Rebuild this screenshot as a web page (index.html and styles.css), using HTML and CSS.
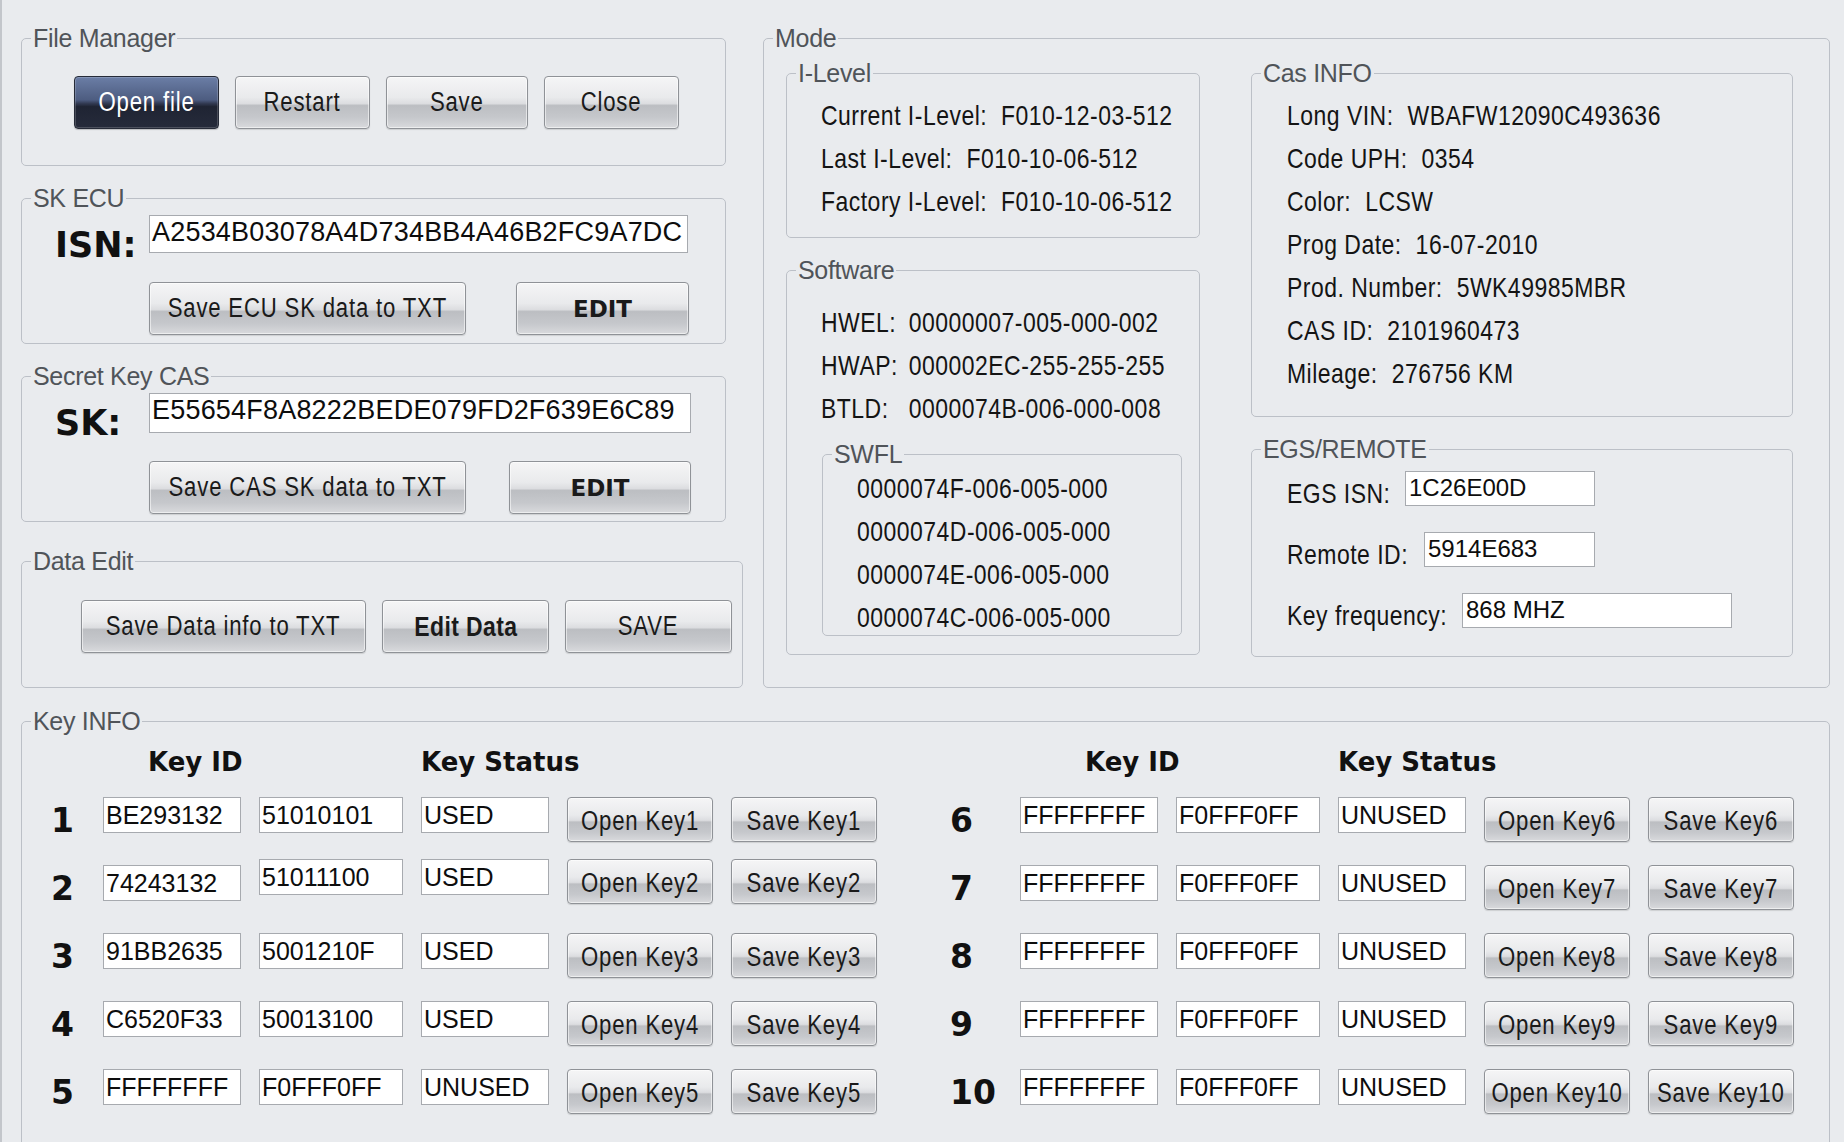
FILE: index.html
```html
<!DOCTYPE html>
<html lang="en">
<head>
<meta charset="utf-8">
<title>CAS Key Manager</title>
<link rel="stylesheet" href="styles.css">
</head>
<body>
<div class="app">
  <div class="top">
    <div class="leftcol">
      <fieldset class="grp fm">
        <legend>File Manager</legend>
        <div class="fm-body">
          <button class="btn dark w145"><span class="cn">Open file</span></button>
          <button class="btn w135"><span class="cn">Restart</span></button>
          <button class="btn w142"><span class="cn">Save</span></button>
          <button class="btn w135"><span class="cn">Close</span></button>
        </div>
      </fieldset>

      <fieldset class="grp ecu">
        <legend>SK ECU</legend>
        <div class="sk-body">
          <div class="sk-row">
            <span class="biglabel">ISN:</span>
            <div class="field big isn">A2534B03078A4D734BB4A46B2FC9A7DC</div>
          </div>
          <div class="sk-btns isn-w">
            <button class="btn w317"><span class="cn">Save ECU SK data to TXT</span></button>
            <button class="btn bold w173">EDIT</button>
          </div>
        </div>
      </fieldset>

      <fieldset class="grp cas">
        <legend>Secret Key CAS</legend>
        <div class="sk-body">
          <div class="sk-row tall">
            <span class="biglabel">SK:</span>
            <div class="field big sk">E55654F8A8222BEDE079FD2F639E6C89</div>
          </div>
          <div class="sk-btns sk-w cas-btns">
            <button class="btn w317"><span class="cn">Save CAS SK data to TXT</span></button>
            <button class="btn bold w182">EDIT</button>
          </div>
        </div>
      </fieldset>

      <fieldset class="grp de">
        <legend>Data Edit</legend>
        <div class="de-body">
          <button class="btn w285"><span class="cn">Save Data info to TXT</span></button>
          <button class="btn semi w167"><span class="cn">Edit Data</span></button>
          <button class="btn w167"><span class="cn">SAVE</span></button>
        </div>
      </fieldset>
    </div>

    <fieldset class="grp mode">
      <legend>Mode</legend>
      <div class="mode-body">
        <div class="mcol">
          <fieldset class="grp ilevel">
            <legend>I-Level</legend>
            <div class="lines pad-il">
              <div class="line"><span class="cn">Current I-Level:<span class="v">F010-12-03-512</span></span></div>
              <div class="line"><span class="cn">Last I-Level:<span class="v">F010-10-06-512</span></span></div>
              <div class="line"><span class="cn">Factory I-Level:<span class="v">F010-10-06-512</span></span></div>
            </div>
          </fieldset>
          <fieldset class="grp software">
            <legend>Software</legend>
            <div class="sw-body">
              <div class="lines">
                <div class="line"><span class="cn"><span class="swl">HWEL:</span>00000007-005-000-002</span></div>
                <div class="line"><span class="cn"><span class="swl">HWAP:</span>000002EC-255-255-255</span></div>
                <div class="line"><span class="cn"><span class="swl">BTLD:</span>0000074B-006-000-008</span></div>
              </div>
              <fieldset class="grp swfl">
                <legend>SWFL</legend>
                <div class="lines pad-swfl">
                  <div class="line"><span class="cn">0000074F-006-005-000</span></div>
                  <div class="line"><span class="cn">0000074D-006-005-000</span></div>
                  <div class="line"><span class="cn">0000074E-006-005-000</span></div>
                  <div class="line"><span class="cn">0000074C-006-005-000</span></div>
                </div>
              </fieldset>
            </div>
          </fieldset>
        </div>
        <div class="mcol">
          <fieldset class="grp casinfo">
            <legend>Cas INFO</legend>
            <div class="lines pad-ci">
              <div class="line"><span class="cn">Long VIN:<span class="v">WBAFW12090C493636</span></span></div>
              <div class="line"><span class="cn">Code UPH:<span class="v">0354</span></span></div>
              <div class="line"><span class="cn">Color:<span class="v">LCSW</span></span></div>
              <div class="line"><span class="cn">Prog Date:<span class="v">16-07-2010</span></span></div>
              <div class="line"><span class="cn">Prod. Number:<span class="v">5WK49985MBR</span></span></div>
              <div class="line"><span class="cn">CAS ID:<span class="v">2101960473</span></span></div>
              <div class="line"><span class="cn">Mileage:<span class="v">276756 KM</span></span></div>
            </div>
          </fieldset>
          <fieldset class="grp egs">
            <legend>EGS/REMOTE</legend>
            <div class="egs-body">
              <div class="egs-row"><span class="egl lw118"><span class="cn">EGS ISN:</span></span><div class="field sm w190">1C26E00D</div></div>
              <div class="egs-row"><span class="egl lw137"><span class="cn">Remote ID:</span></span><div class="field sm w171">5914E683</div></div>
              <div class="egs-row"><span class="egl lw175"><span class="cn">Key frequency:</span></span><div class="field sm w270">868 MHZ</div></div>
            </div>
          </fieldset>
        </div>
      </div>
    </fieldset>
  </div>

  <fieldset class="grp keyinfo">
    <legend>Key INFO</legend>
    <div class="key-body">
      <div class="khalf kleft">
        <div class="krow khead"><span class="kh-id">Key ID</span><span class="kh-st">Key Status</span></div>
        <div class="krow"><span class="knum">1</span><div class="field kf">BE293132</div><div class="field kf">51010101</div><div class="field kf">USED</div><button class="btn kb"><span class="cn">Open Key1</span></button><button class="btn kb"><span class="cn">Save Key1</span></button></div>
        <div class="krow"><span class="knum">2</span><div class="field kf">74243132</div><div class="field kf up">51011100</div><div class="field kf up">USED</div><button class="btn kb up"><span class="cn">Open Key2</span></button><button class="btn kb up"><span class="cn">Save Key2</span></button></div>
        <div class="krow"><span class="knum">3</span><div class="field kf">91BB2635</div><div class="field kf">5001210F</div><div class="field kf">USED</div><button class="btn kb"><span class="cn">Open Key3</span></button><button class="btn kb"><span class="cn">Save Key3</span></button></div>
        <div class="krow"><span class="knum">4</span><div class="field kf">C6520F33</div><div class="field kf">50013100</div><div class="field kf">USED</div><button class="btn kb"><span class="cn">Open Key4</span></button><button class="btn kb"><span class="cn">Save Key4</span></button></div>
        <div class="krow"><span class="knum">5</span><div class="field kf">FFFFFFFF</div><div class="field kf">F0FFF0FF</div><div class="field kf">UNUSED</div><button class="btn kb"><span class="cn">Open Key5</span></button><button class="btn kb"><span class="cn">Save Key5</span></button></div>
      </div>
      <div class="khalf kright">
        <div class="krow khead"><span class="kh-id">Key ID</span><span class="kh-st">Key Status</span></div>
        <div class="krow"><span class="knum">6</span><div class="field kf">FFFFFFFF</div><div class="field kf">F0FFF0FF</div><div class="field kf">UNUSED</div><button class="btn kb"><span class="cn">Open Key6</span></button><button class="btn kb"><span class="cn">Save Key6</span></button></div>
        <div class="krow"><span class="knum">7</span><div class="field kf">FFFFFFFF</div><div class="field kf">F0FFF0FF</div><div class="field kf">UNUSED</div><button class="btn kb"><span class="cn">Open Key7</span></button><button class="btn kb"><span class="cn">Save Key7</span></button></div>
        <div class="krow"><span class="knum">8</span><div class="field kf">FFFFFFFF</div><div class="field kf">F0FFF0FF</div><div class="field kf">UNUSED</div><button class="btn kb"><span class="cn">Open Key8</span></button><button class="btn kb"><span class="cn">Save Key8</span></button></div>
        <div class="krow"><span class="knum">9</span><div class="field kf">FFFFFFFF</div><div class="field kf">F0FFF0FF</div><div class="field kf">UNUSED</div><button class="btn kb"><span class="cn">Open Key9</span></button><button class="btn kb"><span class="cn">Save Key9</span></button></div>
        <div class="krow"><span class="knum">10</span><div class="field kf">FFFFFFFF</div><div class="field kf">F0FFF0FF</div><div class="field kf">UNUSED</div><button class="btn kb"><span class="cn">Open Key10</span></button><button class="btn kb"><span class="cn">Save Key10</span></button></div>
      </div>
    </div>
  </fieldset>
</div>
</body>
</html>
```

FILE: styles.css
```css
html, body {
  margin: 0;
  height: 100%;
  overflow: hidden;
}
body {
  background: #e9ebee;
  box-shadow: inset 2px 0 0 #c3c6cb;
  font-family: "Liberation Sans", Arial, sans-serif;
  color: #151515;
}
.app {
  padding: 24px 0 0 21px;
}
.top {
  display: flex;
  gap: 20px;
  align-items: stretch;
}
.leftcol {
  width: 722px;
  display: flex;
  flex-direction: column;
  align-items: flex-start;
}

/* condensed text: Arial-width glyphs narrowed like a narrow face */
.cn {
  display: inline-block;
  white-space: nowrap;
  transform: scaleX(0.82);
  transform-origin: 0 50%;
}

/* group boxes */
.grp {
  margin: 0;
  padding: 0;
  border: 1px solid #bcc0c7;
  border-radius: 5px;
  box-sizing: border-box;
  min-width: 0;
}
.grp > legend {
  margin-left: 9px;
  padding: 0 2px;
  font-family: "Liberation Sans", Arial, sans-serif;
  font-size: 25px;
  line-height: 28px;
  letter-spacing: -0.3px;
  color: #505459;
}

/* buttons */
.btn {
  box-sizing: border-box;
  display: flex;
  align-items: center;
  justify-content: center;
  height: 53px;
  padding: 0;
  border: 1px solid #8f9297;
  border-radius: 4px;
  background: linear-gradient(#f5f5f6 0%, #e9eaec 40%, #dcdde0 52%, #bcbec2 56%, #c6c8cc 80%, #d9dadd 100%);
  box-shadow: inset 0 0 0 1px rgba(255,255,255,0.55), 0 1px 1px rgba(0,0,0,0.12);
  font-family: "Liberation Sans", Arial, sans-serif;
  font-size: 27px;
  letter-spacing: 1px;
  color: #1a1a1a;
  flex: none;
  white-space: nowrap;
  overflow: hidden;
}
.btn .cn { transform-origin: 50% 50%; flex: none; }
.btn.dark {
  border-color: #262b38;
  background: linear-gradient(#6b7ea6 0%, #4d5c80 45%, #323a52 52%, #1f2433 58%, #262b3b 100%);
  color: #ffffff;
  box-shadow: inset 0 0 0 1px rgba(255,255,255,0.18), 0 1px 1px rgba(0,0,0,0.2);
}
.btn.bold {
  font-family: "DejaVu Sans", "Liberation Sans", sans-serif;
  font-weight: bold;
  font-size: 23px;
  letter-spacing: 0;
}
.btn.semi {
  font-weight: bold;
  font-size: 28px;
  letter-spacing: 0.5px;
}
.w135 { width: 135px; }
.w142 { width: 142px; }
.w145 { width: 145px; }
.w167 { width: 167px; }
.w173 { width: 173px; }
.w182 { width: 182px; }
.w285 { width: 285px; }
.w317 { width: 317px; }

/* text fields */
.field {
  box-sizing: border-box;
  background: #ffffff;
  border: 1px solid #a7aaaf;
  font-family: "Liberation Sans", Arial, sans-serif;
  color: #0d0d0d;
  white-space: nowrap;
  overflow: hidden;
}
.field.big {
  height: 38px;
  font-size: 27px;
  line-height: 32px;
  letter-spacing: 0.2px;
  padding-left: 2px;
}
.field.isn { width: 539px; }
.field.sk { width: 542px; height: 40px; }
.field.sm {
  height: 35px;
  font-size: 24px;
  line-height: 30px;
  padding: 1px 0 0 3px;
}
.w190 { width: 190px; }
.w171 { width: 171px; }
.w270 { width: 270px; }

/* file manager */
.fm { width: 705px; }
.fm-body {
  display: flex;
  gap: 16px;
  padding: 24px 0 36px 52px;
}

/* SK boxes */
.ecu, .cas { width: 705px; margin-top: 18px; }
.sk-body {
  padding: 3px 0 8px 33px;
}
.cas .sk-body { padding-bottom: 7px; }
.sk-row {
  display: flex;
  align-items: flex-start;
  height: 38px;
}
.sk-row.tall { height: 40px; }
.biglabel {
  width: 94px;
  flex: none;
  margin-top: 10px;
  font-family: "DejaVu Sans", "Liberation Sans", sans-serif;
  font-weight: bold;
  font-size: 35px;
  line-height: 40px;
  color: #111;
}
.sk-btns {
  display: flex;
  justify-content: space-between;
  margin: 29px 0 0 94px;
}
.cas-btns { margin-top: 28px; }
.isn-w { width: 540px; }
.sk-w { width: 542px; }

/* data edit */
.de { width: 722px; margin-top: 25px; }
.de-body {
  display: flex;
  gap: 16px;
  padding: 25px 0 34px 59px;
}

/* mode */
.mode { width: 1067px; }
.mode-body {
  display: grid;
  grid-template-columns: 414px 542px;
  column-gap: 51px;
  align-items: start;
  padding: 7px 0 0 22px;
}
.mcol {
  display: flex;
  flex-direction: column;
  gap: 18px;
}
.lines {
  display: flex;
  flex-direction: column;
  gap: 9px;
}
.line {
  height: 34px;
  font-size: 28px;
  line-height: 34px;
  letter-spacing: 0.6px;
  white-space: nowrap;
  color: #141414;
}
.v { margin-left: 17px; }
.pad-il { padding: 12px 0 18px 34px; }
.sw-body { padding: 22px 0 18px 0; }
.sw-body > .lines { padding-left: 34px; }
.swl { display: inline-block; width: 107px; }
.swfl {
  width: 360px;
  margin: 14px 0 0 35px;
}
.pad-swfl { padding: 4px 0 0 34px; }
.pad-ci { padding: 12px 0 25px 35px; }

.egs-body {
  display: flex;
  flex-direction: column;
  gap: 26px;
  padding: 8px 0 28px 35px;
}
.egs-row {
  display: flex;
  align-items: flex-end;
}
.egl {
  flex: none;
  font-size: 28px;
  line-height: 34px;
  letter-spacing: 0.6px;
  color: #141414;
  white-space: nowrap;
  margin-bottom: -5px;
}
.lw118 { width: 118px; }
.lw137 { width: 137px; }
.lw175 { width: 175px; }

/* key info */
.keyinfo {
  width: 1809px;
  height: 450px;
  margin-top: 19px;
}
.key-body {
  display: flex;
  gap: 73px;
  padding: 12px 0 0 29px;
}
.khalf {
  display: flex;
  flex-direction: column;
  gap: 23px;
}
.kleft { --numw: 34px; }
.kright { --numw: 52px; }
.krow {
  display: grid;
  grid-template-columns: var(--numw) 138px 144px 128px 146px 146px;
  column-gap: 18px;
  align-items: start;
  height: 45px;
}
.krow.khead {
  height: 30px;
  margin-bottom: -3px;
}
.khead span {
  font-family: "DejaVu Sans", "Liberation Sans", sans-serif;
  font-weight: bold;
  font-size: 26px;
  line-height: 30px;
  color: #111;
  white-space: nowrap;
}
.kh-id { grid-column: 2 / 4; padding-left: 45px; }
.kright .kh-id { padding-left: 65px; }
.kh-st { grid-column: 4 / 6; }
.knum {
  font-family: "DejaVu Sans", "Liberation Sans", sans-serif;
  font-weight: bold;
  font-size: 33px;
  line-height: 48px;
  color: #111;
  white-space: nowrap;
}
.field.kf {
  height: 36px;
  font-size: 25px;
  line-height: 30px;
  padding: 2px 0 0 2px;
}
.btn.kb {
  width: 146px;
  height: 45px;
  font-size: 27px;
  padding-top: 3px;
}
.up { margin-top: -6px; }
```
